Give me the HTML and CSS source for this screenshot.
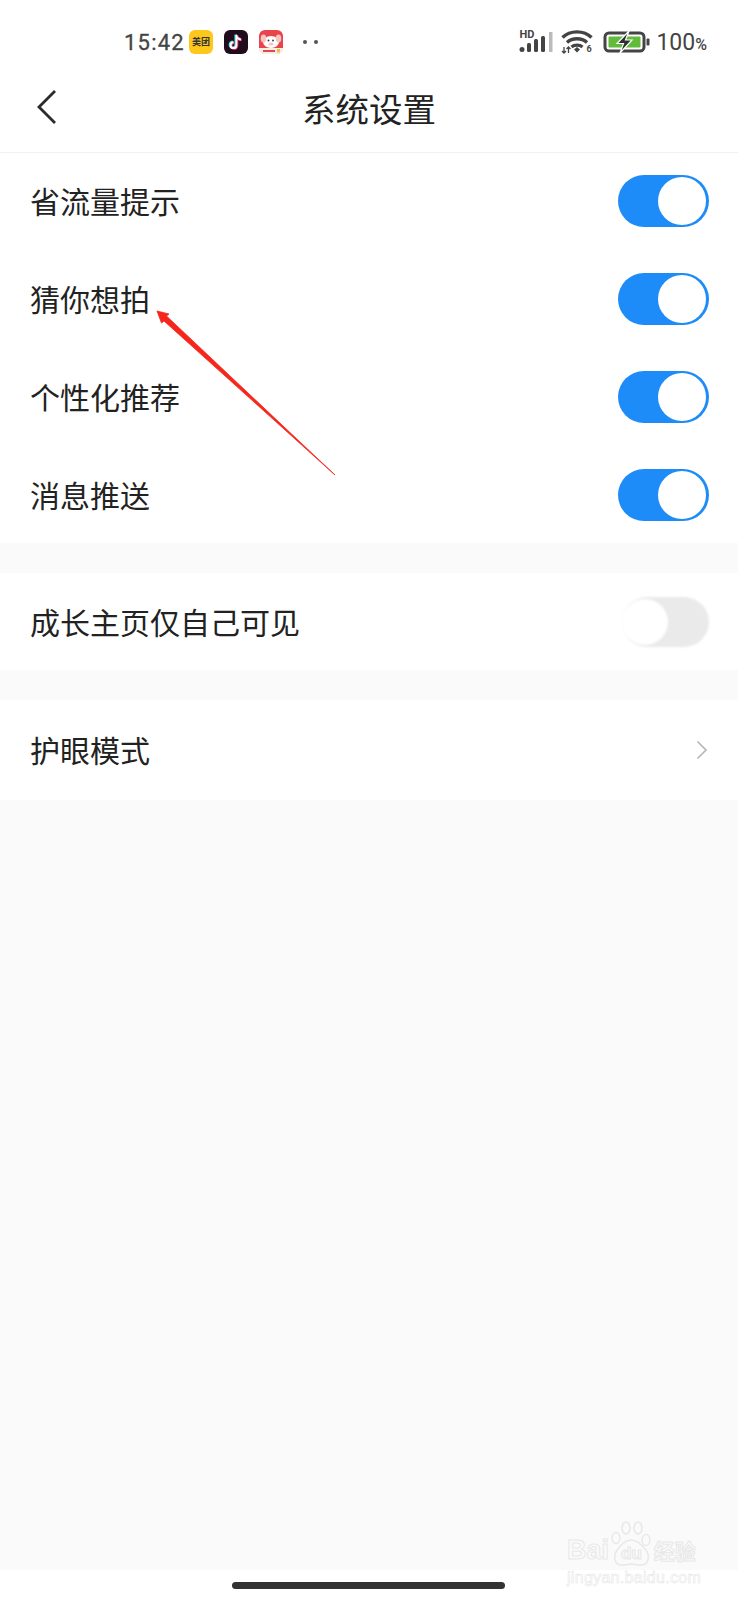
FILE: index.html
```html
<!DOCTYPE html>
<html lang="zh-CN">
<head>
  <meta charset="UTF-8" />
  <meta name="viewport" content="width=device-width, initial-scale=1.0"/>
  <title>系统设置</title>
  <link rel="stylesheet" href="styles.css">
</head>
<body>

<div class="page">
  <div class="status-bar">
    <div class="status-left">
      <span class="time">15:42</span>
      <span class="app-icon meituan">美团</span>
      <svg class="app-icon" viewBox="0 0 24 24">
        <rect width="24" height="24" rx="6" fill="#200c1c"/>
        <path d="M12.400 5v10.200a2.900 2.900 0 1 1-2.900-2.900M12.400 5c.3 2.700 2 4.300 4.600 4.500" fill="none" stroke="#25e0e6" stroke-width="2.600" transform="translate(-.7 -.5)"/>
        <path d="M12.400 5v10.200a2.900 2.900 0 1 1-2.900-2.900M12.400 5c.3 2.700 2 4.300 4.600 4.500" fill="none" stroke="#f0285a" stroke-width="2.600" transform="translate(.7 .5)"/>
        <path d="M12.400 5v10.200a2.900 2.900 0 1 1-2.900-2.900M12.400 5c.3 2.700 2 4.300 4.600 4.500" fill="none" stroke="#fff" stroke-width="2"/>
      </svg>
      <svg class="app-icon" viewBox="0 0 24 24">
        <rect width="24" height="24" rx="6" fill="#e8444c"/>
        <path d="M0 18h24v1a5 5 0 0 1-5 5H5a5 5 0 0 1-5-5z" fill="#f6efe6"/>
        <ellipse cx="12" cy="12" rx="8" ry="6" fill="#fff"/>
        <ellipse cx="4.500" cy="8.500" rx="2.800" ry="4" fill="#f7c4c0"/>
        <ellipse cx="19.500" cy="8.500" rx="2.800" ry="4" fill="#f7c4c0"/>
        <circle cx="9.500" cy="10.500" r=".9" fill="#333"/>
        <circle cx="14" cy="10.500" r=".9" fill="#333"/>
        <ellipse cx="12" cy="14" rx="2.500" ry="1.500" fill="#f7c4c0"/>
        <rect x="4" y="20" width="12" height="2" fill="#e8444c"/>
        <rect x="18" y="19" width="3" height="3.500" fill="#f0c040"/>
      </svg>
      <span class="dots"><i></i><i></i></span>
    </div>
    <div class="status-right">
      <span class="signal">
        <span class="hd">HD</span>
        <svg width="34" height="22" viewBox="0 0 34 22">
          <circle cx="3" cy="18.500" r="2.500" fill="#444"/>
          <rect x="8" y="12" width="4" height="9" rx="1.500" fill="#444"/>
          <rect x="15" y="8" width="4" height="13" rx="1.500" fill="#444"/>
          <rect x="22" y="5" width="4" height="16" rx="1.500" fill="#444"/>
          <rect x="30" y="1" width="3.500" height="20" fill="#bbb"/>
        </svg>
      </span>
      <svg class="wifi" width="32" height="26" viewBox="0 0 32 26">
        <g fill="none" stroke="#444" stroke-width="3.400">
          <path d="M1.500 8.500C9 1 23 1 30.500 8.500"/>
          <path d="M6 13.500C11.500 8.500 20.500 8.500 26 13.500"/>
          <path d="M10.500 18C13.500 15.500 18.500 15.500 21.500 18"/>
        </g>
        <path d="M13 20.500l3-2.500 3 2.500-3 3z" fill="#444"/>
        <path d="M3 18v6M1 22l2 2 2-2M7.500 24v-6M5.500 20l2-2 2 2" fill="none" stroke="#444" stroke-width="1.300"/>
        <text x="25.500" y="23" class="wifi-num">6</text>
      </svg>
      <svg width="47" height="22" viewBox="0 0 47 22">
        <rect x="2" y="2" width="39" height="18" rx="4" fill="none" stroke="#444" stroke-width="3"/>
        <rect x="5.500" y="5.500" width="32" height="11" rx="1" fill="#63bb3c"/>
        <path d="M26 0L14 12.500h6.500L17 22 29 9h-6.500z" fill="#2f2f2f" stroke="#fff" stroke-width="1.200"/>
        <rect x="43.500" y="7.500" width="3" height="7" rx="1" fill="#444"/>
      </svg>
      <span class="battery-text">100<small>%</small></span>
    </div>
  </div>

  <header class="nav-bar">
    <svg class="back" width="22" height="36" viewBox="0 0 22 36">
      <path d="M19 2L3 18l16 16" fill="none" stroke="#2b2b2b" stroke-width="2.800"/>
    </svg>
    <h1>系统设置</h1>
  </header>

  <section class="group group-main">
    <div class="row"><span class="label">省流量提示</span><span class="switch on"></span></div>
    <div class="row"><span class="label">猜你想拍</span><span class="switch on"></span></div>
    <div class="row"><span class="label">个性化推荐</span><span class="switch on"></span></div>
    <div class="row"><span class="label">消息推送</span><span class="switch on"></span></div>
  </section>

  <section class="group">
    <div class="row"><span class="label">成长主页仅自己可见</span><span class="switch"></span></div>
  </section>

  <section class="group">
    <div class="row row-tall">
      <span class="label">护眼模式</span>
      <svg class="chevron" width="12" height="20" viewBox="0 0 12 20">
        <path d="M1.500 1.500L10 10l-8.500 8.500" fill="none" stroke="#b5b5b5" stroke-width="1.600"/>
      </svg>
    </div>
  </section>

  <div class="filler"></div>
  <div class="home-area"><span class="home-bar"></span></div>

  <!-- annotation arrow drawn on the screenshot -->
  <svg class="arrow" width="190" height="175" viewBox="0 0 190 175">
    <path d="M2 1L14 4 11.500 6 180 165 9 11 6.500 13z" fill="#f5261c" stroke="#f5261c" stroke-width=".8" stroke-linejoin="round"/>
  </svg>

  <div class="watermark">
    <svg class="paw" width="42" height="46" viewBox="0 0 42 46">
      <g fill="none" stroke="#e8e8e8" stroke-width="1.500">
        <ellipse cx="6" cy="17" rx="4" ry="5.500"/>
        <ellipse cx="16" cy="7" rx="4" ry="6"/>
        <ellipse cx="28" cy="7" rx="4" ry="6"/>
        <ellipse cx="36" cy="19" rx="4" ry="5.500"/>
        <path d="M21 19c-6 0-10 5-14 10-4 6-3 15 5 15 4 0 6-1 9-1s6 1 10 1c8 0 9-9 5-15-4-5-9-10-15-10z"/>
      </g>
    </svg>
    <div class="wm-top"><span>Bai</span><span class="wm-du">du</span><span class="wm-cn">经验</span></div>
    <div class="wm-url">jingyan.baidu.com</div>
  </div>
</div>

</body>
</html>
```

FILE: styles.css
```css
body {
  margin: 0;
  background: #fff;
  font-family: "Noto Sans CJK SC", "Noto Sans", sans-serif;
  color: #222;
}
.page {
  position: relative;
  width: 738px;
  height: 1600px;
  display: flex;
  flex-direction: column;
  overflow: hidden;
  background: #fafafa;
}

/* status bar */
.status-bar {
  height: 70px;
  flex: none;
  background: #fff;
  display: flex;
  justify-content: space-between;
  align-items: center;
  padding: 14px 31px 0 124px;
  box-sizing: border-box;
}
.status-left, .status-right {
  display: flex;
  align-items: center;
}
.time {
  font-family: Roboto, sans-serif;
  font-size: 22px;
  letter-spacing: 1.2px;
  color: #444;
  width: 65px;
  -webkit-text-stroke: .3px #444;
}
.app-icon {
  width: 24px;
  height: 24px;
  margin-right: 11px;
  flex: none;
}
.meituan {
  background: #fdc71c;
  border-radius: 6px;
  font-size: 9px;
  font-weight: 700;
  line-height: 24px;
  text-align: center;
  color: #333;
}
.dots {
  display: flex;
  gap: 7px;
  margin-left: 9px;
}
.dots i {
  width: 4px;
  height: 4px;
  border-radius: 50%;
  background: #555;
}
.signal {
  position: relative;
  display: block;
  width: 34px;
  height: 22px;
  margin-right: 8px;
}
.hd {
  position: absolute;
  left: 0;
  top: -2px;
  font-family: Roboto, sans-serif;
  font-size: 11px;
  line-height: 11px;
  font-weight: 700;
  color: #444;
}
.wifi {
  margin-right: 10px;
  overflow: visible;
}
.wifi-num {
  font-family: Roboto, sans-serif;
  font-size: 9px;
  font-weight: 700;
  fill: #444;
}
.battery-text {
  font-family: Roboto, sans-serif;
  font-size: 23px;
  color: #444;
  margin-left: 6px;
}
.battery-text small {
  font-size: 16px;
  font-weight: 500;
}

/* nav */
.nav-bar {
  height: 82px;
  flex: none;
  background: #fff;
  box-shadow: 0 1px 0 #f1f1f1;
  display: flex;
  align-items: center;
  justify-content: center;
  position: relative;
  z-index: 1;
}
.nav-bar h1 {
  margin: 0 0 7px;
  font-size: 33.500px;
  font-weight: 400;
  color: #222;
}
.back {
  position: absolute;
  left: 36px;
  top: 19px;
}

/* setting groups */
.group {
  background: #fff;
  margin-bottom: 30px;
  flex: none;
}
.group-main {
  height: 391px;
}
.row {
  height: 97px;
  box-sizing: border-box;
  padding: 0 29px 0 30px;
  display: flex;
  align-items: center;
  justify-content: space-between;
  font-size: 30px;
  color: #222;
}
.label {
  padding-bottom: 2px;
}
.group-main .row {
  height: 98px;
}
.row-tall {
  height: 100px;
}
.switch {
  position: relative;
  width: 87px;
  height: 50px;
  border-radius: 26px;
  background: #eaeaea;
  flex: none;
  filter: blur(.8px);
}
.switch::after {
  content: "";
  position: absolute;
  left: 0;
  top: 2px;
  width: 46px;
  height: 46px;
  border-radius: 50%;
  background: #fff;
}
.switch.on {
  width: 91px;
  height: 52px;
  background: #1e8cf8;
  filter: none;
}
.switch.on::after {
  left: 40px;
  top: 2px;
  width: 48px;
  height: 48px;
}
.chevron {
  margin-right: 1px;
}

.filler {
  flex: 1;
}
.home-area {
  height: 30px;
  flex: none;
  background: #fff;
  position: relative;
}
.home-bar {
  position: absolute;
  left: 232px;
  top: 12px;
  width: 273px;
  height: 7px;
  border-radius: 4px;
  background: #333;
}

/* things laid over the screenshot */
.arrow {
  position: absolute;
  left: 155px;
  top: 310px;
}
.watermark {
  position: absolute;
  left: 567px;
  top: 1520px;
  width: 131px;
  height: 66px;
  color: transparent;
  -webkit-text-stroke: 1px #e8e8e8;
}
.paw {
  position: absolute;
  left: 43px;
  top: 1px;
}
.wm-top {
  position: absolute;
  left: 0;
  top: 15px;
  display: flex;
  align-items: baseline;
  font-family: "Liberation Sans", sans-serif;
  font-size: 27px;
  font-weight: 700;
  white-space: nowrap;
}
.wm-du {
  font-size: 17px;
  margin: 0 12px 0 12px;
}
.wm-cn {
  font-family: "Noto Sans CJK SC", sans-serif;
  font-size: 21px;
}
.wm-url {
  position: absolute;
  left: 0;
  top: 49px;
  font-family: "Liberation Sans", sans-serif;
  font-size: 16px;
  letter-spacing: .3px;
  -webkit-text-stroke-width: .6px;
  white-space: nowrap;
}
```
